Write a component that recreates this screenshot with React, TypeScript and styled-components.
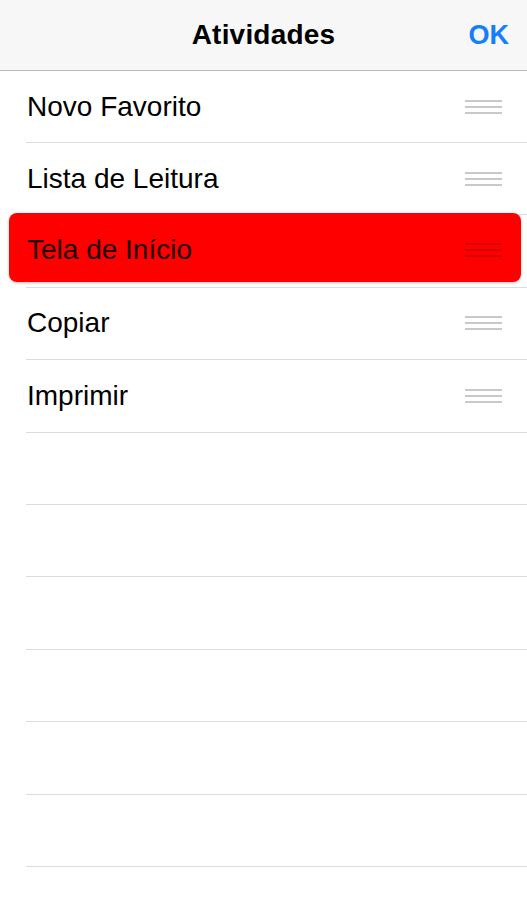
import React from 'react';
import styled, { createGlobalStyle } from 'styled-components';

const GlobalStyle = createGlobalStyle`
  body {
    margin: 0;
    background: #ffffff;
    font-family: 'Liberation Sans', Arial, Helvetica, sans-serif;
    -webkit-font-smoothing: antialiased;
  }
`;

const Screen = styled.div`
  width: 527px;
  height: 900px;
  overflow: hidden;
  background: #ffffff;
`;

const NavBar = styled.header`
  height: 70px;
  background: #f7f7f7;
  border-bottom: 1px solid #b8b8b8;
  display: grid;
  grid-template-columns: 1fr auto 1fr;
  align-items: center;
  padding: 0 18px 0 18px;
`;

const Title = styled.h1`
  grid-column: 2;
  margin: 0;
  font-size: 28px;
  font-weight: 700;
  color: #000000;
  letter-spacing: 0.2px;
`;

const DoneButton = styled.button`
  grid-column: 3;
  justify-self: end;
  border: none;
  background: none;
  padding: 0;
  font-family: inherit;
  font-size: 27px;
  font-weight: 700;
  color: #157efb;
  cursor: pointer;
`;

const List = styled.ul`
  list-style: none;
  margin: 0;
  padding: 0;
`;

const RowSlot = styled.li<{ first?: boolean }>`
  box-sizing: border-box;
  height: ${({ first }) => (first ? '72px' : '72.4px')};
  padding-left: 26px;
  display: flex;
`;

const RowInner = styled.div`
  flex: 1;
  display: flex;
  align-items: center;
  justify-content: space-between;
  border-bottom: 1px solid #dcdcdc;
  padding-right: 25px;
`;

const Label = styled.span<{ dragging?: boolean }>`
  font-size: 28px;
  color: ${({ dragging }) => (dragging ? '#1c0000' : '#000000')};
  padding-left: 1px;
`;

const Handle = styled.div<{ dragging?: boolean }>`
  width: 37px;
  display: flex;
  flex-direction: column;
  gap: 4px;

  span {
    display: block;
    height: 2px;
    background: ${({ dragging }) => (dragging ? '#d40000' : '#c9c9c9')};
  }
`;

// the lifted row covers the separator above it and spreads past the row insets
const DraggedRow = styled.div`
  box-sizing: border-box;
  align-self: flex-start;
  margin: -2px -19px 0 -17px;
  height: 69px;
  flex: 1;
  background: #ff0000;
  border-radius: 8px;
  box-shadow: 0 1px 3px rgba(0, 0, 0, 0.25);
  display: flex;
  align-items: center;
  justify-content: space-between;
  padding: 5px 19px 0 17px;
  position: relative;
  z-index: 1;
`;

const activities = ['Novo Favorito', 'Lista de Leitura', 'Tela de Início', 'Copiar', 'Imprimir'];
const draggedIndex = 2;
const emptyRows = 7;

const DragHandle: React.FC<{ dragging?: boolean }> = ({ dragging }) => (
  <Handle dragging={dragging}>
    <span />
    <span />
    <span />
  </Handle>
);

const App: React.FC = () => {
  return (
    <>
      <GlobalStyle />
      <Screen>
        <NavBar>
          <Title>Atividades</Title>
          <DoneButton>OK</DoneButton>
        </NavBar>
        <List>
          {activities.map((name, i) => (
            <RowSlot key={name} first={i === 0}>
              <RowInner>
                {i === draggedIndex ? (
                  <DraggedRow>
                    <Label dragging>{name}</Label>
                    <DragHandle dragging />
                  </DraggedRow>
                ) : (
                  <>
                    <Label>{name}</Label>
                    <DragHandle />
                  </>
                )}
              </RowInner>
            </RowSlot>
          ))}
          {Array.from({ length: emptyRows }).map((_, i) => (
            <RowSlot key={'empty-' + i}>
              <RowInner />
            </RowSlot>
          ))}
        </List>
      </Screen>
    </>
  );
};

export default App;
